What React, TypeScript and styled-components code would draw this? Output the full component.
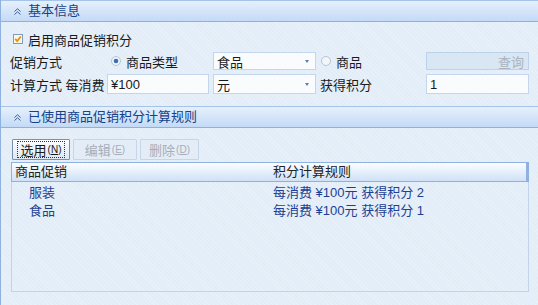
import styled, { createGlobalStyle } from 'styled-components'

const GlobalStyle = createGlobalStyle`
  html, body {
    margin: 0;
    padding: 0;
  }
  body {
    background: #e3edf8;
    font-family: 'Liberation Sans', 'Noto Sans CJK SC', sans-serif;
    font-size: 13px;
    color: #1a1a1a;
  }
`

const Page = styled.div`
  width: 538px;
  height: 305px;
  box-sizing: border-box;
  border-left: 1px solid #8fb1e0;
  background-color: #e3edf8;
  background-image: repeating-linear-gradient(
    45deg,
    rgba(255, 255, 255, 0.18) 0 1px,
    transparent 1px 3px
  );
  overflow: hidden;
`

const PanelHeader = styled.div`
  height: 20px;
  display: flex;
  align-items: center;
  gap: 7px;
  padding-left: 13px;
  background: linear-gradient(#e6f0fc, #c3daf6);
  border-top: 1px solid #a6c3ea;
  border-bottom: 1px solid #8fb1e0;
  color: #15428b;
  line-height: 20px;
`

const Form = styled.div`
  display: grid;
  grid-template-columns: 97px 106px 103px 110px 103px;
  grid-template-rows: 18px 18px 20px;
  row-gap: 4px;
  align-items: center;
  padding: 8px 0 12px 9px;
`

const FullRow = styled.div`
  grid-column: 1 / -1;
  display: flex;
  align-items: center;
  gap: 5px;
  padding-left: 3px;
`

const Label = styled.span<{ $indent?: number }>`
  padding-left: ${(p) => p.$indent ?? 0}px;
  white-space: nowrap;
`

const RadioLabel = styled.label<{ $indent?: number }>`
  display: flex;
  align-items: center;
  gap: 5px;
  padding-left: ${(p) => p.$indent ?? 0}px;
`

const Field = styled.div<{ $w: number; $h: number }>`
  box-sizing: border-box;
  width: ${(p) => p.$w}px;
  height: ${(p) => p.$h}px;
  display: flex;
  align-items: center;
  padding: 0 3px;
  background: #f9fbfd;
  border: 1px solid #c3d6ee;
  position: relative;
`

const Arrow = styled.span`
  position: absolute;
  right: 6px;
  top: 50%;
  margin-top: -1px;
  width: 0;
  height: 0;
  border-left: 2px solid transparent;
  border-right: 2px solid transparent;
  border-top: 3px solid #5a7cb0;
`

const QueryButton = styled.div`
  box-sizing: border-box;
  width: 103px;
  height: 18px;
  display: flex;
  align-items: center;
  justify-content: flex-end;
  padding-right: 4px;
  background: #d9e6f4;
  border: 1px solid #bcd1ea;
  color: #a9b3bf;
`

const RulesBody = styled.div`
  padding: 11px 10px 0 10px;
`

const Toolbar = styled.div`
  display: flex;
  gap: 3px;
  padding-left: 1px;
  margin-bottom: 2px;
`

const Button = styled.div<{ $w: number; $disabled?: boolean }>`
  box-sizing: border-box;
  width: ${(p) => p.$w}px;
  height: 21px;
  display: flex;
  align-items: center;
  justify-content: center;
  border: 1px solid ${(p) => (p.$disabled ? '#c6d5e8' : '#7d8fa8')};
  background: ${(p) =>
    p.$disabled ? '#e4edf7' : 'linear-gradient(#fdfeff, #dde8f4)'};
  color: ${(p) => (p.$disabled ? '#a4adb9' : '#1a1a1a')};
  border-radius: 1px;
`

const FocusRing = styled.span`
  display: flex;
  align-items: center;
  padding: 0 3px;
  height: 15px;
  outline: 1px dotted #333;
`

const Hotkey = styled.span`
  font-size: 10px;
  margin-left: 1px;
  & u {
    text-decoration: underline;
  }
`

const Grid = styled.div`
  box-sizing: border-box;
  width: 518px;
  height: 130px;
  border: 1px solid #c2d4ec;
`

const GridHead = styled.div`
  display: grid;
  grid-template-columns: 258px 1fr;
  height: 18px;
  margin: -1px -1px 0 -1px;
  background: linear-gradient(#fbfdff, #cfe1f7);
  border: 1px solid #8fb1e0;
  border-right-width: 3px;
`

const HeadCell = styled.div`
  display: flex;
  align-items: center;
  padding-left: 3px;
  line-height: 18px;
  color: #222;
`

const GridRow = styled.div`
  display: grid;
  grid-template-columns: 258px 1fr;
  height: 18px;
  align-items: center;
  color: #1d3f93;
`

const Cell = styled.div<{ $indent: number }>`
  padding-left: ${(p) => p.$indent}px;
  white-space: nowrap;
`

const Chevron = () => (
  <svg width="7" height="7" viewBox="0 0 7 7">
    <polyline points="0.5,3.5 3.5,0.8 6.5,3.5" fill="none" stroke="#3a5f9a" strokeWidth="1" />
    <polyline points="0.5,6.5 3.5,3.8 6.5,6.5" fill="none" stroke="#3a5f9a" strokeWidth="1" />
  </svg>
)

const CheckBox = () => (
  <svg width="10" height="10" viewBox="0 0 10 10">
    <rect x="0.5" y="0.5" width="9" height="9" fill="#fdf6e0" stroke="#7f9bc0" />
    <polyline points="2.2,4.8 4.2,7 7.8,2.5" fill="none" stroke="#e09216" strokeWidth="1.8" />
  </svg>
)

const Radio = ({ checked }: { checked?: boolean }) => (
  <svg width="10" height="10" viewBox="0 0 10 10">
    <circle cx="5" cy="5" r="4.5" fill={checked ? '#eef4fb' : '#f3f6f9'} stroke="#b5c4d6" />
    {checked && <circle cx="5" cy="5" r="2.3" fill="#3d6db5" />}
  </svg>
)

const rules = [
  { name: '服装', rule: '每消费 ¥100元 获得积分 2' },
  { name: '食品', rule: '每消费 ¥100元 获得积分 1' },
]

export default function App() {
  return (
    <>
      <GlobalStyle />
      <Page>
        <PanelHeader>
          <Chevron />
          <span>基本信息</span>
        </PanelHeader>
        <Form>
          <FullRow>
            <CheckBox />
            <span>启用商品促销积分</span>
          </FullRow>

          <Label>促销方式</Label>
          <RadioLabel $indent={4}>
            <Radio checked />
            <span>商品类型</span>
          </RadioLabel>
          <Field $w={103} $h={18}>
            食品
            <Arrow />
          </Field>
          <RadioLabel $indent={5}>
            <Radio />
            <span>商品</span>
          </RadioLabel>
          <QueryButton>查询</QueryButton>

          <Label>计算方式 每消费</Label>
          <Field $w={102} $h={20}>¥100</Field>
          <Field $w={103} $h={20}>
            元
            <Arrow />
          </Field>
          <Label $indent={4}>获得积分</Label>
          <Field $w={103} $h={20}>1</Field>
        </Form>

        <PanelHeader>
          <Chevron />
          <span>已使用商品促销积分计算规则</span>
        </PanelHeader>
        <RulesBody>
          <Toolbar>
            <Button $w={58}>
              <FocusRing>
                选用
                <Hotkey>
                  (<u>N</u>)
                </Hotkey>
              </FocusRing>
            </Button>
            <Button $w={64} $disabled>
              编辑
              <Hotkey>
                (<u>E</u>)
              </Hotkey>
            </Button>
            <Button $w={59} $disabled>
              删除
              <Hotkey>
                (<u>D</u>)
              </Hotkey>
            </Button>
          </Toolbar>
          <Grid>
            <GridHead>
              <HeadCell>商品促销</HeadCell>
              <HeadCell>积分计算规则</HeadCell>
            </GridHead>
            {rules.map((r) => (
              <GridRow key={r.name}>
                <Cell $indent={17}>{r.name}</Cell>
                <Cell $indent={3}>{r.rule}</Cell>
              </GridRow>
            ))}
          </Grid>
        </RulesBody>
      </Page>
    </>
  )
}
